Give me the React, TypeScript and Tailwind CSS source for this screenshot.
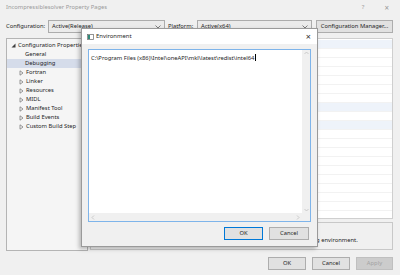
import React from "react";

const treeItems = [
  { label: "Fortran", arrow: true },
  { label: "Linker", arrow: true },
  { label: "Resources", arrow: true },
  { label: "MIDL", arrow: true },
  { label: "Manifest Tool", arrow: true },
  { label: "Build Events", arrow: true },
  { label: "Custom Build Step", arrow: true },
];

// rows of the property grid, true = tinted row
const gridRows = [true, false, false, false, false, false, false, true, false, true, false, false, false, false, false, false, false, false, false, false];

function Caret() {
  return (
    <svg width="6" height="4" viewBox="0 0 6 4" className="shrink-0">
      <path d="M0.5 0.5 L3 3 L5.5 0.5" fill="none" stroke="#606060" strokeWidth="0.8" />
    </svg>
  );
}

function Collapsed() {
  return (
    <svg width="5" height="6" viewBox="0 0 5 6" className="shrink-0">
      <path d="M1 0.8 L4 3 L1 5.2 Z" fill="none" stroke="#707070" strokeWidth="0.7" />
    </svg>
  );
}

function Expanded() {
  return (
    <svg width="5" height="5" viewBox="0 0 5 5" className="shrink-0">
      <path d="M4.5 0.5 L4.5 4.5 L0.5 4.5 Z" fill="#404040" />
    </svg>
  );
}

function WinButton({ label, primary, disabled, className }: { label: string; primary?: boolean; disabled?: boolean; className?: string }) {
  return (
    <div
      className={
        "flex h-[13px] items-center justify-center border text-[5.8px] " +
        (disabled
          ? "border-[#bfbfbf] bg-[#cccccc] text-[#a3a3a3] "
          : primary
          ? "border-[#0078d7] bg-[#e1e1e1] text-[#1e1e1e] "
          : "border-[#adadad] bg-[#e1e1e1] text-[#1e1e1e] ") +
        (className ?? "")
      }
    >
      {label}
    </div>
  );
}

function EnvironmentDialog() {
  return (
    <div className="absolute left-[81px] top-[28px] flex h-[219px] w-[237px] flex-col border border-[#9a9a9a] bg-[#f0f0f0] shadow-[-2px_2px_4px_rgba(0,0,0,0.25)]">
      {/* title bar */}
      <div className="flex h-[15px] shrink-0 items-center bg-white pl-[5px] pr-[6px]">
        <svg width="7" height="6" viewBox="0 0 7 6" className="mr-[2px]">
          <rect x="0.5" y="0.5" width="6" height="5" fill="#ffffff" stroke="#7a7a7a" strokeWidth="0.8" />
          <rect x="1" y="1" width="2" height="4" fill="#2f8a7a" />
        </svg>
        <span className="text-[5.9px] text-[#1e1e1e]">Environment</span>
        <span className="ml-auto text-[9px] leading-none text-[#333]">×</span>
      </div>
      <div className="flex flex-1 flex-col px-[6px] pt-[5px]">
        {/* text box */}
        <div className="relative flex h-[173px] flex-col border border-[#7eb4ea] bg-white">
          <div className="flex flex-1">
            <div className="flex-1 pl-[2px] pt-[3px] text-[5.8px] leading-[8px] text-[#1e1e1e]">
              C:\Program Files (x86)\Intel\oneAPI\mkl\latest\redist\intel64
              <span className="ml-[0.5px] inline-block h-[7px] w-[0.7px] translate-y-[1px] bg-black" />
            </div>
            <div className="flex w-[8px] flex-col items-center justify-between bg-[#f0f0f0] py-[1px]">
              <svg width="5" height="4" viewBox="0 0 5 4">
                <path d="M0.5 3 L2.5 1 L4.5 3" fill="none" stroke="#c0c0c0" strokeWidth="0.8" />
              </svg>
              <svg width="5" height="4" viewBox="0 0 5 4">
                <path d="M0.5 1 L2.5 3 L4.5 1" fill="none" stroke="#c0c0c0" strokeWidth="0.8" />
              </svg>
            </div>
          </div>
          <div className="flex h-[8px] items-center">
            <div className="flex h-full flex-1 items-center justify-between bg-[#f0f0f0] px-[2px]">
              <svg width="4" height="5" viewBox="0 0 4 5">
                <path d="M3 0.5 L1 2.5 L3 4.5" fill="none" stroke="#c0c0c0" strokeWidth="0.8" />
              </svg>
              <svg width="4" height="5" viewBox="0 0 4 5">
                <path d="M1 0.5 L3 2.5 L1 4.5" fill="none" stroke="#c0c0c0" strokeWidth="0.8" />
              </svg>
            </div>
            <div className="h-full w-[8px] bg-[#f0f0f0]" />
          </div>
        </div>
        <div className="mt-[5px] flex justify-end gap-[6px] pr-[2px]">
          <WinButton label="OK" primary className="w-[39px]" />
          <WinButton label="Cancel" className="w-[40px]" />
        </div>
      </div>
    </div>
  );
}

export default function App() {
  return (
    <div className="relative h-[275px] w-[400px] overflow-hidden bg-[#f0f0f0] font-['Noto_Sans',sans-serif] text-[#1e1e1e]">
      <div className="flex h-[275px] flex-col pl-[6px] pr-[7px]">
        {/* window title */}
        <div className="flex h-[20px] shrink-0 items-start pt-[3px]">
          <span className="text-[5.8px] text-[#9a9a9a]">Incompressiblesolver Property Pages</span>
          <span className="ml-auto mr-[20px] text-[6px] text-[#9a9a9a]">?</span>
          <span className="mr-[4px] text-[8px] leading-[10px] text-[#9a9a9a]">×</span>
        </div>

        {/* configuration row */}
        <div className="flex h-[13px] shrink-0 items-center text-[5.8px]">
          <span className="w-[42px]">Configuration:</span>
          <div className="flex h-full w-[117px] items-center justify-between border border-[#acacac] bg-[#ebebeb] pl-[3px] pr-[3px]">
            <span>Active(Release)</span>
            <Caret />
          </div>
          <span className="ml-[3px] w-[29px]">Platform:</span>
          <div className="flex h-full w-[115px] items-center justify-between border border-[#acacac] bg-[#ebebeb] pl-[3px] pr-[3px]">
            <span>Active(x64)</span>
            <Caret />
          </div>
          <WinButton label="Configuration Manager..." className="ml-auto w-[77px]" />
        </div>

        {/* main area */}
        <div className="mt-[5px] flex h-[213px] shrink-0 gap-[2px]">
          <div className="flex w-[82px] flex-col border border-[#b4b4b4] bg-[#f5f5f5] pt-[2px] text-[5.8px]">
            <div className="flex h-[9px] items-center gap-[2px] pl-[4px] whitespace-nowrap">
              <Expanded />
              <span>Configuration Properties</span>
            </div>
            <div className="flex h-[9px] items-center pl-[18px]">General</div>
            <div className="flex h-[9px] items-center bg-[#d5dcea] pl-[18px]">Debugging</div>
            {treeItems.map((it) => (
              <div key={it.label} className="flex h-[9px] items-center gap-[2px] pl-[12px] whitespace-nowrap">
                <Collapsed />
                <span>{it.label}</span>
              </div>
            ))}
          </div>
          <div className="flex flex-1 flex-col">
            <div className="flex h-[181px] flex-col overflow-hidden border border-[#cfcfcf] bg-white pt-[1px]">
              {gridRows.map((tint, i) => (
                <div key={i} className={"h-[9px] shrink-0 border-b border-[#f2f2f2] " + (tint ? "bg-[#eef3fa]" : "bg-white")} />
              ))}
            </div>
            <div className="mt-[3px] flex h-[28px] flex-col justify-center overflow-hidden border border-[#c8c8c8] bg-[#f0f0f0] pl-[15px] text-[5.8px] leading-[8px]">
              <span className="font-bold">Environment</span>
              <span className="whitespace-nowrap">Specifies the environment for the debugee, or variables to merge with existing environment.</span>
            </div>
          </div>
        </div>

        {/* bottom buttons */}
        <div className="mt-[6px] flex justify-end gap-[6px]">
          <WinButton label="OK" className="w-[38px]" />
          <WinButton label="Cancel" className="w-[38px]" />
          <WinButton label="Apply" disabled className="w-[37px]" />
        </div>
      </div>

      <EnvironmentDialog />
    </div>
  );
}
